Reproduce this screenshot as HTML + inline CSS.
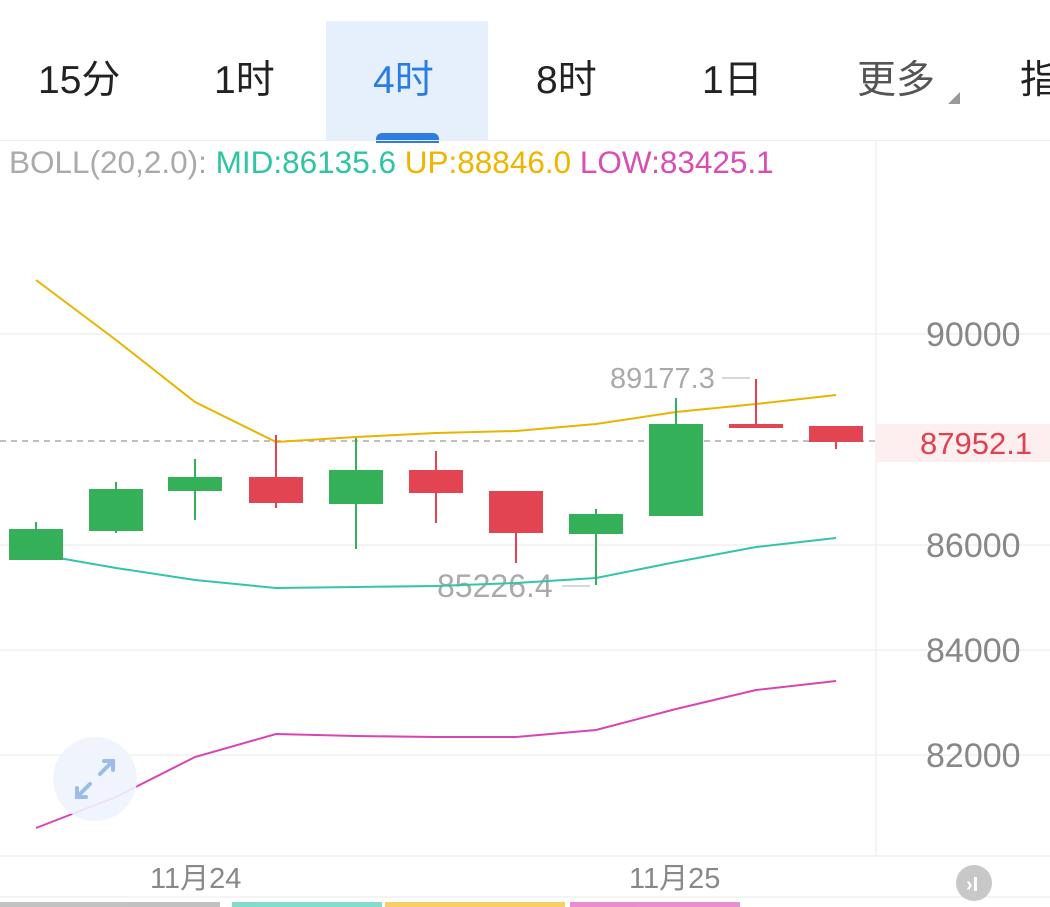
<!DOCTYPE html>
<html><head><meta charset="utf-8"><style>
body{margin:0;width:1050px;height:907px;overflow:hidden;background:#fff;font-family:"Liberation Sans","Noto Sans CJK SC",sans-serif;position:relative}
.tab{position:absolute;top:58px;font-size:39px;color:#222;line-height:46px}
</style></head><body>
<div style="position:absolute;left:326px;top:21px;width:162px;height:119px;background:#e6f0fc"></div>
<div style="position:absolute;left:376px;top:133px;width:63px;height:10px;background:#2f7de1;border-radius:6px 6px 0 0"></div>
<div style="position:absolute;left:0;top:140px;width:1050px;height:1px;background:#eee"></div>
<div class="tab" style="left:38px">15分</div>
<div class="tab" style="left:214px">1时</div>
<div class="tab" style="left:373px;color:#2a7de1">4时</div>
<div class="tab" style="left:536px">8时</div>
<div class="tab" style="left:702px">1日</div>
<div class="tab" style="left:857px;color:#555">更多</div>
<div style="position:absolute;left:948px;top:92px;width:0;height:0;border-left:12px solid transparent;border-bottom:12px solid #999"></div>
<div class="tab" style="left:1020px">指</div>
<div style="position:absolute;left:9px;top:143px;font-size:31.5px;line-height:38px;white-space:nowrap;color:#aaa">BOLL(20,2.0): <span style="color:#2ec4a4">MID:86135.6</span> <span style="color:#f0b400">UP:88846.0</span> <span style="color:#d94db4">LOW:83425.1</span></div>
<svg width="1050" height="907" style="position:absolute;left:0;top:0" font-family="Liberation Sans,sans-serif">
<g stroke="#f0f0f0" stroke-width="1.5">
<line x1="0" y1="334" x2="1050" y2="334"/><line x1="0" y1="545" x2="1050" y2="545"/><line x1="0" y1="650" x2="1050" y2="650"/><line x1="0" y1="755" x2="1050" y2="755"/>
<line x1="876" y1="140" x2="876" y2="856"/><line x1="0" y1="856" x2="1050" y2="856"/><line x1="0" y1="897" x2="1050" y2="897"/>
</g>
<rect x="876" y="424" width="174" height="38" fill="#fdeef0"/>
<line x1="0" y1="441" x2="876" y2="441" stroke="#aaa" stroke-width="1.5" stroke-dasharray="6,5"/>
<g font-size="34" fill="#888"><text x="926" y="346">90000</text><text x="926" y="557">86000</text><text x="926" y="662">84000</text><text x="926" y="767">82000</text></g>
<text x="920" y="454" font-size="31" fill="#e0404f">87952.1</text>
<g fill="#aaa" font-size="29"><text x="610" y="388">89177.3</text></g>
<text x="437" y="597" fill="#aaa" font-size="32">85226.4</text>
<g stroke="#ccc" stroke-width="1.5"><line x1="722" y1="378" x2="750" y2="378"/><line x1="562" y1="586" x2="590" y2="586"/></g>
<polyline fill="none" stroke="#e8b400" stroke-width="2" points="36,280 116,340 195,402 276,442 356,437 436,433 516,431 596,424 676,412 756,404 836,395"/>
<polyline fill="none" stroke="#33c4aa" stroke-width="2" points="36,554 116,568 195,580 276,588 356,587 436,586 516,583 596,578 676,562 756,547 836,538"/>
<polyline fill="none" stroke="#d844b4" stroke-width="2" points="36,828 116,797 195,757 276,734 356,736 436,737 516,737 596,730 676,709 756,690 836,681"/>
<g stroke-width="2">
<g stroke="#34b158" fill="#34b158">
<line x1="36" y1="522" x2="36" y2="559"/><rect x="10" y="530" width="52" height="29"/>
<line x1="116" y1="482" x2="116" y2="533"/><rect x="90" y="490" width="52" height="40"/>
<line x1="195" y1="459" x2="195" y2="520"/><rect x="169" y="478" width="52" height="12"/>
<line x1="356" y1="438" x2="356" y2="549"/><rect x="330" y="471" width="52" height="32"/>
<line x1="596" y1="509" x2="596" y2="585"/><rect x="570" y="515" width="52" height="18"/>
<line x1="676" y1="398" x2="676" y2="515"/><rect x="650" y="425" width="52" height="90"/>
</g>
<g stroke="#e24452" fill="#e24452">
<line x1="276" y1="435" x2="276" y2="508"/><rect x="250" y="478" width="52" height="24"/>
<line x1="436" y1="451" x2="436" y2="523"/><rect x="410" y="471" width="52" height="21"/>
<line x1="516" y1="492" x2="516" y2="563"/><rect x="490" y="492" width="52" height="40"/>
<line x1="756" y1="379" x2="756" y2="427"/><rect x="730" y="425" width="52" height="2"/>
<line x1="836" y1="427" x2="836" y2="449"/><rect x="810" y="427" width="52" height="14"/>
</g></g>
<circle cx="95" cy="779" r="42" fill="#eef4fd" opacity="0.9"/>
<g stroke="#9bbde8" stroke-width="4" fill="none" stroke-linecap="round">
<path d="M100 774 L113 761 M104 761 L113 761 L113 770"/><path d="M90 784 L77 797 M77 788 L77 797 L86 797"/>
</g>
<g font-size="29" fill="#888"><text x="150" y="888">11月24</text><text x="629" y="888">11月25</text></g>
<circle cx="974" cy="883" r="18" fill="#c8c8c8"/>
<text x="966" y="891" font-size="20" fill="#fff" font-weight="bold">›I</text>
<g opacity="0.6"><rect x="0" y="902" width="220" height="5" fill="#999"/><rect x="232" y="902" width="150" height="5" fill="#33c4aa"/><rect x="385" y="902" width="180" height="5" fill="#f0b400"/><rect x="570" y="902" width="170" height="5" fill="#d844b4"/></g>
</svg>
</body></html>
